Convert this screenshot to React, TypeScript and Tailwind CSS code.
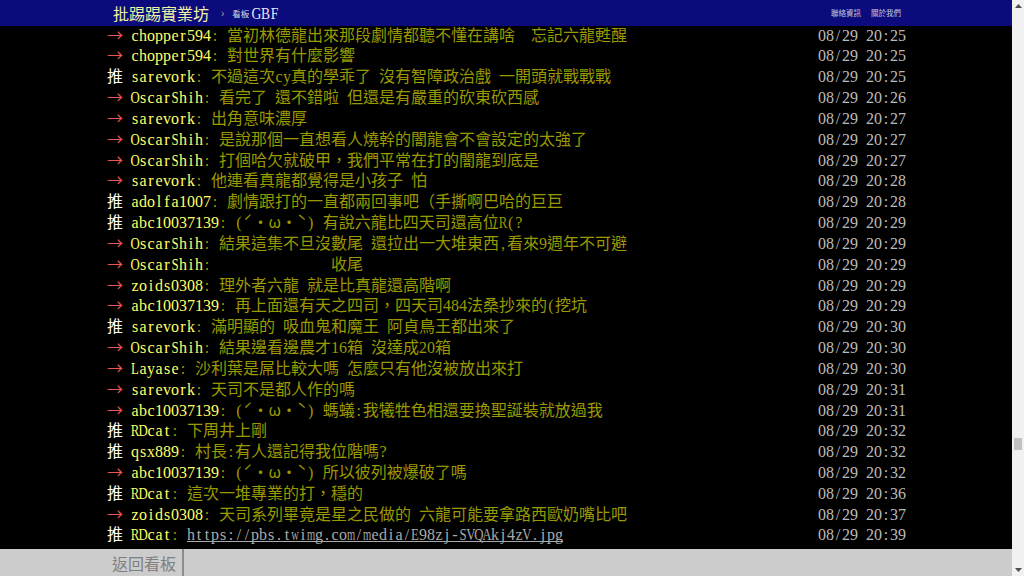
import React from "react"

type Row = [string, string, string, string]

const rows: Row[] = [
  ["→", "chopper594", "當初林德龍出來那段劇情都聽不懂在講啥  忘記六龍甦醒", "20:25"],
  ["→", "chopper594", "對世界有什麼影響", "20:25"],
  ["推", "sarevork", "不過這次cy真的學乖了 沒有智障政治戲 一開頭就戰戰戰", "20:25"],
  ["→", "OscarShih", "看完了 還不錯啦 但還是有嚴重的砍東砍西感", "20:26"],
  ["→", "sarevork", "出角意味濃厚", "20:27"],
  ["→", "OscarShih", "是說那個一直想看人燒幹的闇龍會不會設定的太強了", "20:27"],
  ["→", "OscarShih", "打個哈欠就破甲，我們平常在打的闇龍到底是", "20:27"],
  ["→", "sarevork", "他連看真龍都覺得是小孩子 怕", "20:28"],
  ["推", "adolfa1007", "劇情跟打的一直都兩回事吧（手撕啊巴哈的巨巨", "20:28"],
  ["推", "abc10037139", "(ˊ・ω・ˋ) 有說六龍比四天司還高位R(?", "20:29"],
  ["→", "OscarShih", "結果這集不旦沒數尾 還拉出一大堆東西,看來9週年不可避", "20:29"],
  ["→", "OscarShih", "              收尾", "20:29"],
  ["→", "zoids0308", "理外者六龍 就是比真龍還高階啊", "20:29"],
  ["→", "abc10037139", "再上面還有天之四司，四天司484法桑抄來的(挖坑", "20:29"],
  ["推", "sarevork", "滿明顯的 吸血鬼和魔王 阿貞鳥王都出來了", "20:30"],
  ["→", "OscarShih", "結果邊看邊農才16箱 沒達成20箱", "20:30"],
  ["→", "Layase", "沙利葉是屌比較大嗎 怎麼只有他沒被放出來打", "20:30"],
  ["→", "sarevork", "天司不是都人作的嗎", "20:31"],
  ["→", "abc10037139", "(ˊ・ω・ˋ) 螞蟻:我犧牲色相還要換聖誕裝就放過我", "20:31"],
  ["推", "RDcat", "下周井上剛", "20:32"],
  ["推", "qsx889", "村長:有人還記得我位階嗎?", "20:32"],
  ["→", "abc10037139", "(ˊ・ω・ˋ) 所以彼列被爆破了嗎", "20:32"],
  ["推", "RDcat", "這次一堆專業的打，穩的", "20:36"],
  ["→", "zoids0308", "天司系列畢竟是星之民做的 六龍可能要拿路西歐奶嘴比吧", "20:37"],
  ["推", "RDcat", "https://pbs.twimg.com/media/E98zj-SVQAkj4zV.jpg", "20:39"],
]

// squeeze glyphs that are wider than a half-width cell
function squeeze(c: string) {
  if ("mwMW@".includes(c)) return " scale-x-[0.66]"
  if (/[A-Z]/.test(c)) return " scale-x-[0.8]"
  return ""
}

// half-width chars sit in 8px cells like the terminal font, the rest stays full-width
function Term({ s, cell = "w-[8px]" }: { s: string; cell?: string }) {
  return (
    <>
      {s
        .split(/([\x20-\x7e]+)/)
        .filter(Boolean)
        .map((part, i) =>
          /^[\x20-\x7e]+$/.test(part) ? (
            <span key={i} className="font-['Liberation_Serif',serif]">
              {[...part].map((c, j) => (
                <span key={j} className={"inline-flex justify-center " + cell + squeeze(c)}>
                  {c}
                </span>
              ))}
            </span>
          ) : (
            <span key={i} className="font-['Noto_Sans_CJK_TC',sans-serif]">
              {part}
            </span>
          ),
        )}
    </>
  )
}

function PushRow({ row }: { row: Row }) {
  const [tag, user, content, time] = row
  const isLink = content.startsWith("http")
  return (
    <div className="flex items-baseline h-[20.83px] leading-[20.83px] text-[16px] whitespace-nowrap overflow-hidden">
      <span
        className={
          "w-[24px] shrink-0 font-['Noto_Sans_CJK_TC',sans-serif] " +
          (tag === "推" ? "text-white" : "text-[#e85555]")
        }
      >
        {tag}
      </span>
      <span className="text-[#ff6]">
        <Term s={user} />
      </span>
      <span className="text-[#990]">
        <Term s=": " />
      </span>
      <span className="flex-1 overflow-hidden">
        {isLink ? (
          <span className="relative inline-block text-[#aaa]">
            <Term s={content} />
            <span className="absolute left-0 right-0 bottom-[4px] h-px bg-[#aaa]" />
          </span>
        ) : (
          <span className="text-[#990]">
            <Term s={content} />
          </span>
        )}
      </span>
      <span className="shrink-0 text-[#bbb]">
        <Term s={"08/29 " + time} />
      </span>
    </div>
  )
}

function Scrollbar() {
  return (
    <div className="w-[12px] shrink-0 bg-[#f1f1f1] flex flex-col items-center justify-between py-[4px]">
      <svg width="7" height="4" viewBox="0 0 7 4">
        <polygon points="3.5,0 7,4 0,4" fill="#505050" />
      </svg>
      <div className="flex-1 w-full relative">
        <div className="absolute left-[2px] right-[2px] top-[430px] h-[12px] bg-[#c1c1c1]" />
      </div>
      <svg width="7" height="4" viewBox="0 0 7 4">
        <polygon points="0,0 7,0 3.5,4" fill="#505050" />
      </svg>
    </div>
  )
}

export default function App() {
  return (
    <div className="flex h-[576px] w-full overflow-hidden bg-black">
      <div className="flex-1 flex flex-col min-w-0">
        <header className="relative z-10 h-[26px] shrink-0 bg-[#0b0b7d]">
          <div className="mx-auto w-[800px] h-full flex items-center pl-[7px] pr-[5px]">
            <span className="font-['Noto_Sans_CJK_TC',sans-serif] text-[16px] leading-none text-[#f2f2a2]">
              批踢踢實業坊
            </span>
            <span className="ml-[12px] text-[10px] text-[#aaa] font-['Liberation_Sans',sans-serif]">›</span>
            <span className="ml-[8px] text-[8.5px] text-[#ddd] font-['Noto_Sans_CJK_TC',sans-serif]">看板</span>
            <span className="ml-[3px] text-[17px] leading-none text-[#e8e8f4]">
              <Term s="GBF" cell="w-[9px]" />
            </span>
            <div className="ml-auto flex gap-[10px] text-[7.5px] text-[#c8c8dc] font-['Noto_Sans_CJK_TC',sans-serif]">
              <span>聯絡資訊</span>
              <span>關於我們</span>
            </div>
          </div>
        </header>

        <main className="flex-1 mt-[-2.4px] overflow-hidden">
          <div className="mx-auto w-[800px] pl-px">
            {rows.map((row, i) => (
              <PushRow key={i} row={row} />
            ))}
          </div>
        </main>

        <footer className="h-[27px] shrink-0 flex bg-[#cccccc]">
          <div className="w-[184px] h-full flex items-center justify-end pr-[6px] border-r-2 border-[#8c8c8c]">
            <span className="font-['Noto_Sans_CJK_TC',sans-serif] text-[16px] leading-none text-[#808080]">返回看板</span>
          </div>
        </footer>
      </div>
      <Scrollbar />
    </div>
  )
}
